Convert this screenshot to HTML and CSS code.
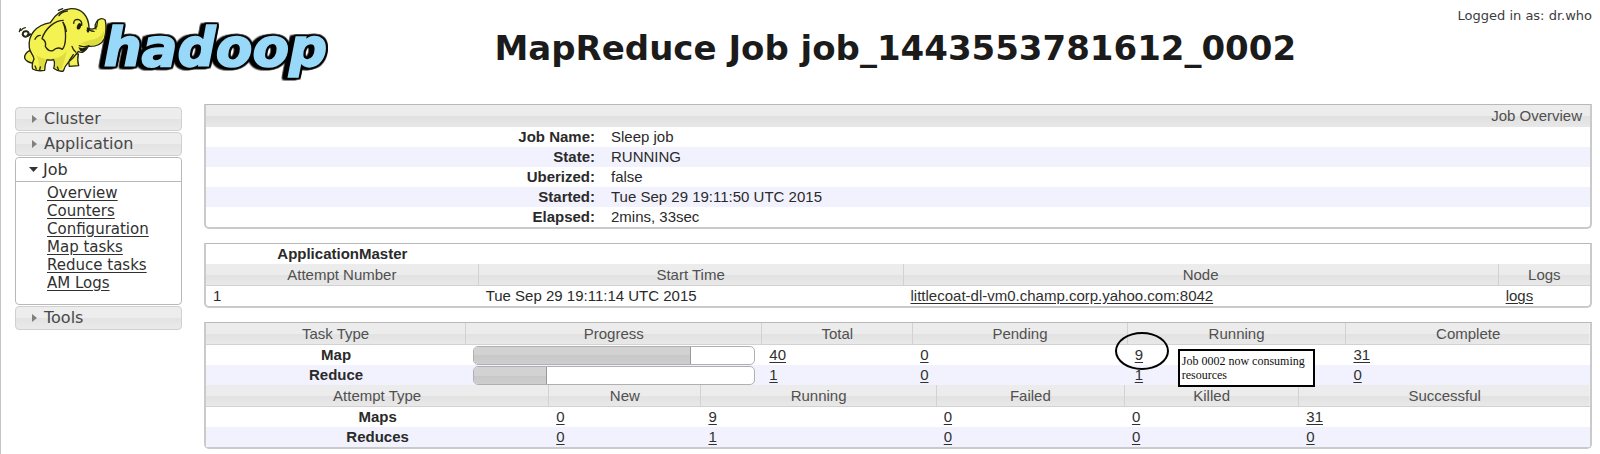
FILE: index.html
```html
<!DOCTYPE html>
<html lang="en">
<head>
<meta charset="utf-8">
<title>MapReduce Job job_1443553781612_0002</title>
<link rel="stylesheet" href="styles.css">
</head>
<body>
<header class="page-header">
  <a class="logo" href="#" aria-label="Hadoop home">
    <svg viewBox="0 0 1020 270" role="img" aria-label="hadoop">
      <text class="wordmark" x="308" y="198">hadoop</text>
      <g class="elephant">
        <path class="skin" d="M200 165 L205 160 L232 162 Q228 182 233 197 L205 199 Z"/>
        <path class="skin" d="M86 152 Q70 160 71 174 Q75 186 97 190 L108 165 Z"/>
        <path class="skin" d="M148 68 C105 76 80 104 85 143 C86 157 98 164 99 177 Q91 194 95 207 Q110 215 131 211 Q131 194 138 179 Q148 182 158 179 Q163 189 158 205 Q172 216 187 213 Q190 200 202 187 C215 176 222 168 232 154 Q247 165 262 139 Q298 141 310 116 Q318 90 313 61 Q303 51 290 61 L287 80 Q273 92 264 84 C263 48 243 25 210 26 C180 28 161 46 148 68 Z"/>
        <path class="shade" d="M262 136 Q297 138 306 114 L311 88 Q299 118 268 120 Q250 125 238 132 M105 165 Q133 184 158 174 Q180 175 198 152 Q190 183 182 208 L162 204 Q166 185 157 176 L136 176 L126 207 L112 208 Q118 184 105 165"/>
        <path class="skin" d="M188 61 C161 61 133 85 123 116 Q137 124 133 139 Q143 157 157 151 Q169 139 184 148 C196 136 197 91 186 66"/>
        <path class="tail" d="M88 103 Q70 117 65 103 Q66 91 78 94 Q87 98 79 107"/>
        <path class="line" d="M174 47 Q180 35 199 33 M60 91 Q65 84 73 83 M55 95 L58 86 M172 31 L185 26 M218 70 Q219 56 233 59 Q244 63 242 76 M259 84 Q266 93 279 94 M285 87 Q278 75 290 61 M235 137 Q248 143 264 137 M224 156 Q216 149 213 139 M102 118 Q107 106 118 106 M186 67 Q194 77 196 94 M102 198 L106 207 M118 201 L116 210 M169 201 L173 211 M217 164 L205 181"/>
        <path class="ink" d="M232 142 Q247 148 259 139 Q252 161 238 153 Z"/>
        <ellipse class="ink" cx="234" cy="79" rx="6" ry="10" transform="rotate(20 234 79)"/>
        <ellipse class="ink" cx="261" cy="91" rx="4" ry="7"/>
      </g>
    </svg>
  </a>
  <h1 class="page-title">MapReduce Job job_1443553781612_0002</h1>
  <div class="user">Logged in as: dr.who</div>
</header>
<div class="layout">
  <nav class="sidebar">
    <button class="nav-head" type="button" aria-expanded="false"><span class="arrow"></span>Cluster</button>
    <button class="nav-head" type="button" aria-expanded="false"><span class="arrow"></span>Application</button>
    <div class="nav-group">
      <button class="nav-head nav-head-open" type="button" aria-expanded="true"><span class="arrow arrow-down"></span>Job</button>
      <ul class="nav-list">
        <li><a href="#">Overview</a></li>
        <li><a href="#">Counters</a></li>
        <li><a href="#">Configuration</a></li>
        <li><a href="#">Map tasks</a></li>
        <li><a href="#">Reduce tasks</a></li>
        <li><a href="#">AM Logs</a></li>
      </ul>
    </div>
    <button class="nav-head" type="button" aria-expanded="false"><span class="arrow"></span>Tools</button>
  </nav>
  <main class="content">
    <section class="panel">
      <h2 class="panel-title">Job Overview</h2>
      <table class="info">
        <tr><th scope="row">Job Name:</th><td>Sleep job</td></tr>
        <tr><th scope="row">State:</th><td>RUNNING</td></tr>
        <tr><th scope="row">Uberized:</th><td>false</td></tr>
        <tr><th scope="row">Started:</th><td>Tue Sep 29 19:11:50 UTC 2015</td></tr>
        <tr><th scope="row">Elapsed:</th><td>2mins, 33sec</td></tr>
      </table>
    </section>
    <section class="panel">
      <table class="grid master">
        <colgroup><col class="m1"><col class="m2"><col class="m3"><col></colgroup>
        <thead>
          <tr class="plain"><th>ApplicationMaster</th><td colspan="3"></td></tr>
          <tr class="heads"><th scope="col">Attempt Number</th><th scope="col">Start Time</th><th scope="col">Node</th><th scope="col">Logs</th></tr>
        </thead>
        <tbody>
          <tr><td>1</td><td>Tue Sep 29 19:11:14 UTC 2015</td><td><a href="#">littlecoat-dl-vm0.champ.corp.yahoo.com:8042</a></td><td><a href="#">logs</a></td></tr>
        </tbody>
      </table>
    </section>
    <section class="panel">
      <table class="grid">
        <colgroup><col class="t1"><col class="t2"><col class="t3"><col class="t4"><col class="t5"><col></colgroup>
        <thead>
          <tr class="heads"><th scope="col">Task Type</th><th scope="col">Progress</th><th scope="col">Total</th><th scope="col">Pending</th><th scope="col">Running</th><th scope="col">Complete</th></tr>
        </thead>
        <tbody>
          <tr>
            <th scope="row">Map</th>
            <td><div class="bar" role="progressbar" aria-label="Map progress" aria-valuenow="78"><div class="fill" style="width: 77.5%"></div></div></td>
            <td><a href="#">40</a></td><td><a href="#">0</a></td>
            <td class="noted"><a href="#">9</a><span class="ring"></span><span class="note">Job 0002 now consuming resources</span></td>
            <td><a href="#">31</a></td>
          </tr>
          <tr>
            <th scope="row">Reduce</th>
            <td><div class="bar" role="progressbar" aria-label="Reduce progress" aria-valuenow="26"><div class="fill" style="width: 26%"></div></div></td>
            <td><a href="#">1</a></td><td><a href="#">0</a></td><td><a href="#">1</a></td><td><a href="#">0</a></td>
          </tr>
        </tbody>
      </table>
      <table class="grid">
        <colgroup><col class="a1"><col class="a2"><col class="a3"><col class="a4"><col class="a5"><col></colgroup>
        <thead>
          <tr class="heads"><th scope="col">Attempt Type</th><th scope="col">New</th><th scope="col">Running</th><th scope="col">Failed</th><th scope="col">Killed</th><th scope="col">Successful</th></tr>
        </thead>
        <tbody>
          <tr><th scope="row">Maps</th><td><a href="#">0</a></td><td><a href="#">9</a></td><td><a href="#">0</a></td><td><a href="#">0</a></td><td><a href="#">31</a></td></tr>
          <tr><th scope="row">Reduces</th><td><a href="#">0</a></td><td><a href="#">1</a></td><td><a href="#">0</a></td><td><a href="#">0</a></td><td><a href="#">0</a></td></tr>
        </tbody>
      </table>
    </section>
  </main>
</div>
</body>
</html>
```
FILE: styles.css
```css
* { box-sizing: border-box; }

html { background: #fff; }

body {
  margin: 0;
  min-height: 100vh;
  border-left: 1px solid #c4c4c4;
  font-family: "Liberation Sans", Arial, sans-serif;
  font-size: 15px;
  line-height: 20px;
  color: #2a2a2a;
}

a { color: #303030; text-underline-offset: 2px; }

.page-header {
  display: grid;
  grid-template-columns: 332px 1fr auto;
  height: 104px;
  padding-right: 8px;
}

.logo svg { display: block; width: 340px; height: 90px; }

/* Blue letters with a black rim, thicker on the left as an extrusion */
.wordmark {
  font-family: "DejaVu Sans", Verdana, sans-serif;
  font-size: 160px;
  font-weight: bold;
  font-style: oblique;
  fill: #98d8f8;
  stroke: #98d8f8;
  stroke-width: 5px;
  filter: drop-shadow(5px 0 0 #000) drop-shadow(-5px 0 0 #000) drop-shadow(0 5px 0 #000) drop-shadow(0 -5px 0 #000) drop-shadow(-11px 2px 0 #000);
}

.skin { fill: #f4f250; stroke: #252510; stroke-width: 4px; stroke-linejoin: round; }
.shade { fill: #cfce35; opacity: 0.6; }
.line, .tail { fill: none; stroke: #252510; stroke-width: 4px; stroke-linecap: round; }
.tail { stroke-width: 6px; }
.ink { fill: #1c1c10; }

.page-title {
  margin: 0;
  padding-top: 28px;
  font-family: "DejaVu Sans", Verdana, sans-serif;
  font-size: 34px;
  line-height: 40px;
  text-align: center;
  white-space: nowrap;
  color: #1b1b1b;
}

.user {
  padding-top: 6px;
  font-family: "DejaVu Sans", Verdana, sans-serif;
  font-size: 13px;
  color: #3c3c3c;
}

.layout {
  display: grid;
  grid-template-columns: 167px 1fr;
  gap: 22px;
  padding: 0 8px 2px 14px;
}

.sidebar {
  display: flex;
  flex-direction: column;
  gap: 1px;
  padding-top: 3px;
  font-family: "DejaVu Sans", Verdana, sans-serif;
}

.nav-head {
  display: flex;
  align-items: center;
  gap: 7px;
  width: 100%;
  height: 24px;
  padding: 0 16px;
  border: 1px solid #d0d0d0;
  border-radius: 4px;
  background: linear-gradient(#ededed 50%, #e3e3e3 50%, #eaeaea);
  font: 16px/20px "DejaVu Sans", Verdana, sans-serif;
  color: #484848;
}

.arrow {
  width: 5px;
  height: 8px;
  background: #808080;
  clip-path: polygon(0 0, 100% 50%, 0 100%);
}
.arrow-down {
  width: 9px;
  height: 5px;
  margin: 0 -2px;
  background: #333;
  clip-path: polygon(0 0, 100% 0, 50% 100%);
}

.nav-group { border: 1px solid #b8b8b8; border-radius: 4px; }
.nav-head-open {
  padding: 0 15px;
  border-width: 0 0 1px;
  border-color: #b8b8b8;
  border-radius: 4px 4px 0 0;
  background: #fff;
  color: #333;
}

.nav-list {
  margin: 0;
  padding: 2px 0 12px 31px;
  list-style: none;
  line-height: 18px;
}

.content { display: grid; gap: 14px; align-content: start; }

.panel {
  border: 2px solid #cacaca;
  border-top-color: #b9b9b9;
  border-width: 1px 2px 2px;
  border-radius: 0 0 5px 5px;
}

.panel-title {
  margin: 0;
  padding: 1px 8px;
  background: linear-gradient(#ececec 50%, #e0e0e0 50%, #e8e8e8);
  font-size: 15px;
  font-weight: normal;
  text-align: right;
  color: #505050;
}

table { width: 100%; border-collapse: separate; border-spacing: 0; }
th, td { padding: 0 7px; }

.info th { width: 397px; padding-right: 8px; text-align: right; }
.info td { padding-left: 8px; }
.info tr:nth-child(even), .grid tbody tr:nth-child(even) { background: #f2f2fe; }

.grid { table-layout: fixed; }
.m1 { width: 19.7%; } .m2 { width: 30.7%; } .m3 { width: 43%; }
.t1 { width: 18.8%; } .t2 { width: 21.4%; } .t3 { width: 10.9%; } .t4 { width: 15.5%; } .t5 { width: 15.8%; }
.a1 { width: 24.8%; } .a2 { width: 11%; } .a3 { width: 17%; } .a4 { width: 13.6%; } .a5 { width: 12.6%; }

.heads { background: linear-gradient(#ececec 50%, #e2e2e2 50%, #e9e9e9); }
.heads th {
  height: 22px;
  border-right: 1px solid #d2d2d2;
  border-bottom: 1px solid #d2d2d2;
  font-weight: normal;
  color: #505050;
}
.heads th:last-child { border-right: 0; }

.bar {
  height: 19px;
  margin: 1px 0 0;
  border: 1px solid #b0b0b0;
  border-radius: 5px;
  overflow: hidden;
  background: #fff;
}
.fill {
  height: 100%;
  border-right: 1px solid #999;
  background: linear-gradient(#d2d2d2 50%, #c8c8c8 50%, #cecece);
}

.noted { position: relative; }
.ring {
  position: absolute;
  left: -13px;
  top: -13px;
  width: 54px;
  height: 38px;
  border: 2px solid #000;
  border-radius: 50%;
}
.note {
  position: absolute;
  left: 50px;
  top: 4px;
  width: 137px;
  height: 38px;
  padding: 3px 0 0 2px;
  border: 2px solid #000;
  background: #fff;
  font-family: "Liberation Serif", "Times New Roman", serif;
  font-size: 12px;
  line-height: 14px;
  color: #111;
}
```
